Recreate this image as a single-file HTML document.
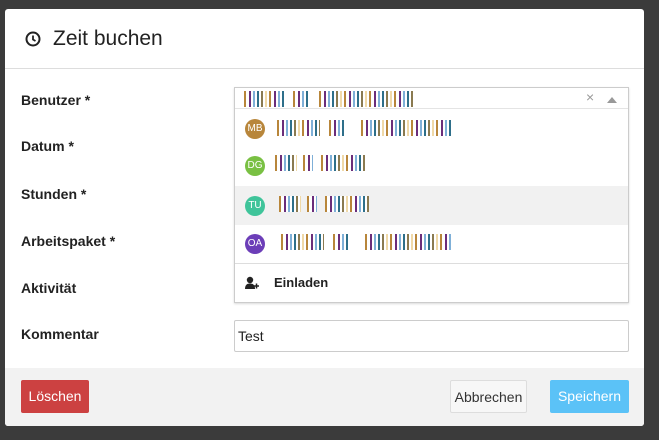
<!DOCTYPE html>
<html><head><meta charset="utf-8"><style>
*{box-sizing:border-box;margin:0;padding:0}
body{width:659px;height:440px;background:#3b3b3b;font-family:"Liberation Sans",sans-serif;position:relative;overflow:hidden;color:#222}
.modal{position:absolute;left:5px;top:9px;width:639px;height:417px;background:#fff;border-radius:3px;overflow:hidden}
.hdr{height:60px;border-bottom:1px solid #ddd;position:relative}
.hdr h1{position:absolute;left:48px;top:18px;font-size:21px;font-weight:normal;color:#222}
.lbl{position:absolute;left:16px;font-size:14px;font-weight:bold;color:#222}
.ftr{position:absolute;left:0;top:359px;width:639px;height:58px;background:#f2f2f2}
.btn{position:absolute;top:12px;height:33px;font-size:14px;line-height:33px;text-align:center;border-radius:2px}
.bar{position:absolute;height:16px;background:repeating-linear-gradient(90deg,#b8863b 0 2px,#fff 2px 5px,#6b2d7a 5px 7px,#fff 7px 9px,#7fb0d8 9px 11px,#fff 11px 13px,#2e6f8a 13px 15px,#fff 15px 17px,#8a7a50 17px 19px,#fff 19px 21px,#f0d9a8 21px 23px,#fff 23px 25px)}
.av{position:absolute;left:10px;width:20px;height:20px;border-radius:50%;color:#fff;font-size:10px;line-height:20px;text-align:center}
</style></head><body>
<div class="modal">
 <div class="hdr">
  <svg style="position:absolute;left:20px;top:22px" width="16" height="16" viewBox="0 0 16 16"><circle cx="8" cy="8" r="6.5" fill="none" stroke="#222" stroke-width="2"/><path d="M8 4.5V8.5L10.5 10" fill="none" stroke="#222" stroke-width="1.8"/></svg>
  <h1>Zeit buchen</h1>
 </div>
 <div class="lbl" style="top:83px">Benutzer <span>*</span></div>
 <div class="lbl" style="top:129px">Datum *</div>
 <div class="lbl" style="top:177px">Stunden *</div>
 <div class="lbl" style="top:224px">Arbeitspaket *</div>
 <div class="lbl" style="top:271px">Aktivität</div>
 <div class="lbl" style="top:317px">Kommentar</div>
 <div style="position:absolute;left:229px;top:311px;width:395px;height:32px;border:1px solid #ccc;border-radius:2px;font-size:14px;line-height:30px;padding-left:3px">Test</div>
 <div style="position:absolute;left:229px;top:78px;width:395px;height:216px;border:1px solid #ccc;background:#fff;box-shadow:0 1px 2px rgba(0,0,0,.15)">
  <div style="height:21px;border-bottom:1px solid #e4e4e4;position:relative">
   <div class="bar" style="left:9px;top:3px;width:42px"></div><div class="bar" style="left:58px;top:3px;width:15px"></div><div class="bar" style="left:84px;top:3px;width:96px"></div>
   <span style="position:absolute;left:351px;top:1px;color:#999;font-size:14px">×</span>
   <span style="position:absolute;left:372px;top:9px;width:0;height:0;border-left:5px solid transparent;border-right:5px solid transparent;border-bottom:6px solid #999"></span>
  </div>
  <div style="position:relative;height:195px">
   <div class="av" style="top:10px;background:#b8863b">MB</div><div class="bar" style="left:42px;top:11px;width:43px"></div><div class="bar" style="left:94px;top:11px;width:16px"></div><div class="bar" style="left:126px;top:11px;width:92px"></div>
   <div class="av" style="top:47px;background:#79c043">DG</div><div class="bar" style="left:40px;top:46px;width:22px"></div><div class="bar" style="left:68px;top:46px;width:10px"></div><div class="bar" style="left:86px;top:46px;width:44px"></div>
   <div style="position:absolute;left:0;top:77px;width:393px;height:39px;background:#f1f1f1"></div>
   <div class="av" style="top:87px;background:#3fc49a">TU</div><div class="bar" style="left:44px;top:87px;width:22px"></div><div class="bar" style="left:72px;top:87px;width:10px"></div><div class="bar" style="left:90px;top:87px;width:44px"></div>
   <div class="av" style="top:125px;background:#6c3eb8">OA</div><div class="bar" style="left:46px;top:125px;width:43px"></div><div class="bar" style="left:98px;top:125px;width:16px"></div><div class="bar" style="left:130px;top:125px;width:88px"></div>
   <div style="position:absolute;left:0;top:154px;width:393px;border-top:1px solid #ddd"></div>
   <svg style="position:absolute;left:10px;top:167px" width="15" height="14" viewBox="0 0 15 14"><circle cx="5" cy="4" r="3.2" fill="#222"/><path d="M0 13C0 9 2 7.5 5 7.5S10 9 10 13Z" fill="#222"/><path d="M9 10h5M11.5 7.5v5" stroke="#222" stroke-width="1.5"/></svg>
   <div style="position:absolute;left:39px;top:166px;font-size:13px;font-weight:bold">Einladen</div>
  </div>
 </div>
 <div class="ftr">
  <div class="btn" style="left:16px;width:68px;background:#cc4141;color:#fff">Löschen</div>
  <div class="btn" style="left:445px;width:77px;background:#f7f7f7;border:1px solid #ddd;color:#333">Abbrechen</div>
  <div class="btn" style="left:545px;width:79px;background:#5bc2f7;color:#fff">Speichern</div>
 </div>
</div>
</body></html>
